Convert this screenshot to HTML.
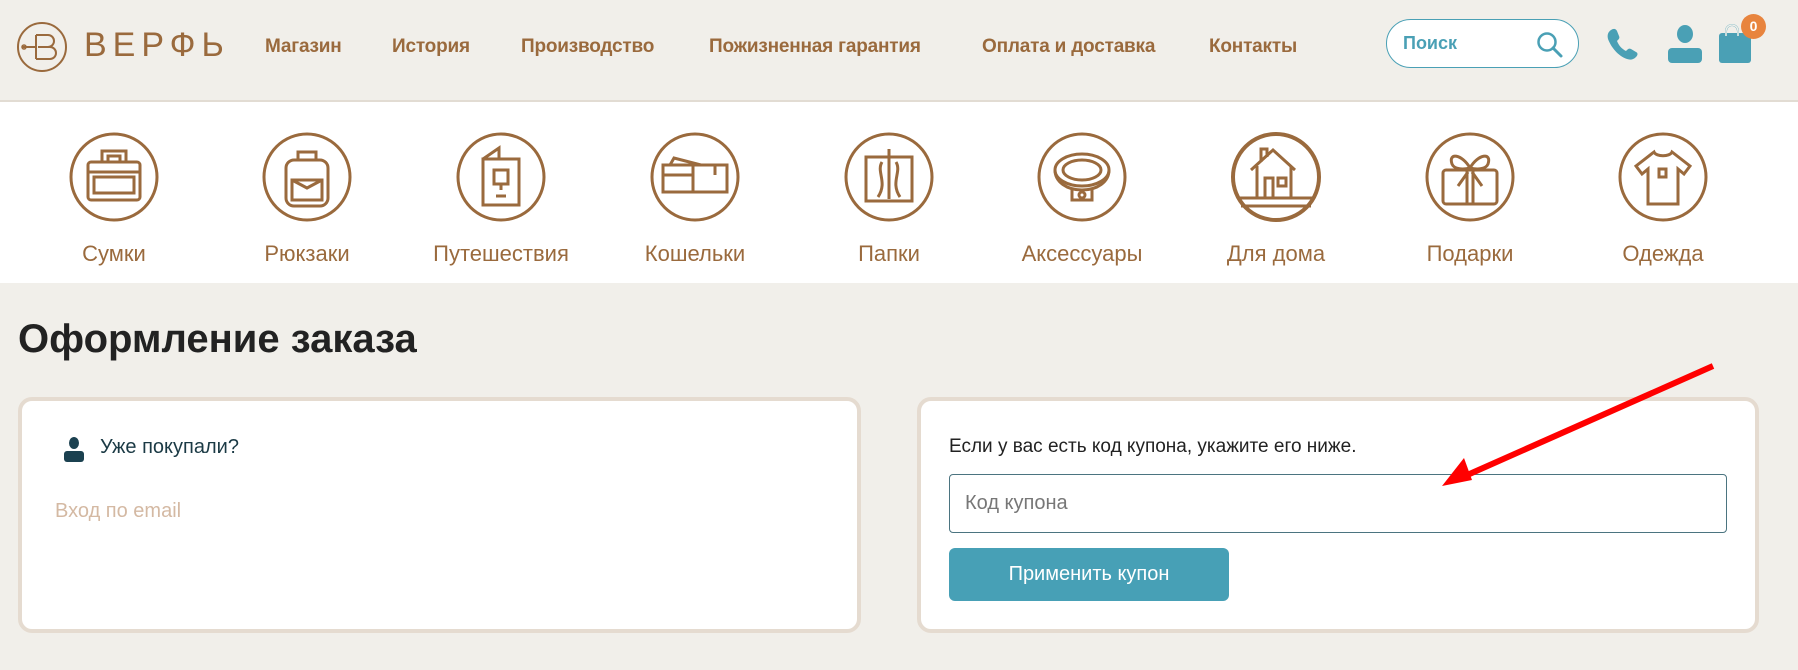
<!DOCTYPE html>
<html><head><meta charset="utf-8"><style>
*{margin:0;padding:0;box-sizing:border-box}
body{width:1798px;height:670px;background:#f1efea;font-family:"Liberation Sans","DejaVu Sans",sans-serif;position:relative;overflow:hidden}
.abs{position:absolute}
header{position:absolute;left:0;top:0;width:1798px;height:102px;border-bottom:2px solid #e2dcd3}
.nav{position:absolute;top:36px;font-size:19px;font-weight:bold;color:#9a6a3d;white-space:nowrap;letter-spacing:-0.2px}
.cats{position:absolute;left:0;top:102px;width:1798px;height:181px;background:#fff}
.cat{position:absolute;top:30px;width:190px;margin-left:-95px;text-align:center}
.cat svg{display:block;margin:0 auto}
.cat span{display:block;margin-top:19px;font-size:22px;color:#9a6a3d}
.box{position:absolute;top:397px;height:236px;background:#fff;border:4px solid #e5dbd0;border-radius:14px}
</style></head><body>
<header>
<svg class="abs" style="left:16px;top:21px" width="52" height="52" viewBox="0 0 52 52"><circle cx="26" cy="26" r="24" fill="none" stroke="#9a6a3d" stroke-width="2"/><path d="M20 14v24M20 14h12a6 6 0 0 1 0 12h-10M22 26h12a6 6 0 0 1 0 12H20M6 26h14" fill="none" stroke="#9a6a3d" stroke-width="2"/><circle cx="8" cy="26" r="2" fill="none" stroke="#9a6a3d" stroke-width="1.5"/></svg>
<div class="abs" style="left:84px;top:26px;font-size:34px;color:#9a6a3d;letter-spacing:6px;font-weight:300">ВЕРФЬ</div>
<div class="nav" style="left:265px">Магазин</div>
<div class="nav" style="left:392px">История</div>
<div class="nav" style="left:521px">Производство</div>
<div class="nav" style="left:709px">Пожизненная гарантия</div>
<div class="nav" style="left:982px">Оплата и доставка</div>
<div class="nav" style="left:1209px">Контакты</div>
<div class="abs" style="left:1386px;top:19px;width:193px;height:49px;border:1.5px solid #4aa0b5;border-radius:25px;background:#fff"><span class="abs" style="left:16px;top:13px;font-size:18px;font-weight:bold;color:#4aa0b5">Поиск</span>
<svg class="abs" style="left:148px;top:10px" width="30" height="30" viewBox="0 0 30 30"><circle cx="12" cy="12" r="8.5" fill="none" stroke="#4aa0b5" stroke-width="2.5"/><path d="M18 18l8 8" stroke="#4aa0b5" stroke-width="3" stroke-linecap="round"/></svg></div>
<svg class="abs" style="left:1605px;top:27px" width="38" height="36" viewBox="0 0 38 36"><path d="M6 3c3-2 5-1 6 1l2 5c1 2 0 3-2 5 2 5 5 8 9 10 2-2 3-3 5-2l5 3c2 1 2 3 0 5-3 3-6 3-9 2C13 29 6 20 3 12 2 8 3 5 6 3z" fill="#4aa0b5"/></svg>
<svg class="abs" style="left:1667px;top:24px" width="36" height="40" viewBox="0 0 36 40"><ellipse cx="18" cy="10" rx="8" ry="9" fill="#4aa0b5"/><rect x="1" y="24" width="34" height="15" rx="4" fill="#4aa0b5"/></svg>
<svg class="abs" style="left:1718px;top:22px" width="36" height="42" viewBox="0 0 36 42"><path d="M8 14V9a6 6 0 0 1 12 0v5" fill="none" stroke="#4aa0b5" stroke-width="2"/><rect x="1" y="11" width="32" height="30" rx="3" fill="#4aa0b5"/><path d="M8 14V9a6 6 0 0 1 12 0v5" fill="none" stroke="#f1efea" stroke-width="1.5"/></svg>
<div class="abs" style="left:1741px;top:14px;width:25px;height:25px;border-radius:50%;background:#e8843e;color:#fff;font-size:14px;font-weight:bold;text-align:center;line-height:25px">0</div>
</header>
<div class="cats">
<div class="cat" style="left:114px"><svg width="90" height="90" viewBox="0 0 90 90"><ellipse cx="45" cy="45" rx="43" ry="43" fill="none" stroke="#9a6a3d" stroke-width="3"/><g fill="none" stroke="#9a6a3d" stroke-width="3"><rect x="19" y="30" width="52" height="38" rx="3"/><rect x="25" y="45" width="40" height="16"/><path d="M33 30V19h24v11M39 30V24h12v6M19 40h52"/></g></svg><span>Сумки</span></div>
<div class="cat" style="left:307px"><svg width="90" height="90" viewBox="0 0 90 90"><ellipse cx="45" cy="45" rx="43" ry="43" fill="none" stroke="#9a6a3d" stroke-width="3"/><g fill="none" stroke="#9a6a3d" stroke-width="3"><rect x="24" y="28" width="42" height="46" rx="8"/><rect x="30" y="48" width="30" height="20"/><path d="M36 28v-8h18v8M30 48l15 8 15-8"/></g></svg><span>Рюкзаки</span></div>
<div class="cat" style="left:501px"><svg width="90" height="90" viewBox="0 0 90 90"><ellipse cx="45" cy="45" rx="43" ry="43" fill="none" stroke="#9a6a3d" stroke-width="3"/><g fill="none" stroke="#9a6a3d" stroke-width="3"><rect x="27" y="27" width="36" height="46"/><path d="M27 27l16-11v11M38 38h14v14H38zM45 52v6M40 64h10"/></g></svg><span>Путешествия</span></div>
<div class="cat" style="left:695px"><svg width="90" height="90" viewBox="0 0 90 90"><ellipse cx="45" cy="45" rx="43" ry="43" fill="none" stroke="#9a6a3d" stroke-width="3"/><g fill="none" stroke="#9a6a3d" stroke-width="3"><rect x="13" y="33" width="64" height="27"/><path d="M13 43h30v17M43 43V33M20 33l4-7 27 7M65 33v10"/></g></svg><span>Кошельки</span></div>
<div class="cat" style="left:889px"><svg width="90" height="90" viewBox="0 0 90 90"><ellipse cx="45" cy="45" rx="43" ry="43" fill="none" stroke="#9a6a3d" stroke-width="3"/><g fill="none" stroke="#9a6a3d" stroke-width="3"><rect x="22" y="25" width="46" height="44"/><path d="M45 17v50M38 30c-6 10 6 20-4 35M52 30c6 10-6 20 4 35"/></g></svg><span>Папки</span></div>
<div class="cat" style="left:1082px"><svg width="90" height="90" viewBox="0 0 90 90"><ellipse cx="45" cy="45" rx="43" ry="43" fill="none" stroke="#9a6a3d" stroke-width="3"/><g fill="none" stroke="#9a6a3d" stroke-width="3"><ellipse cx="45" cy="38" rx="27" ry="16"/><ellipse cx="45" cy="38" rx="19" ry="10"/><path d="M18 38c0 12 12 20 27 20s27-8 27-20M35 56v12h20V56"/><circle cx="45" cy="63" r="3"/></g></svg><span>Аксессуары</span></div>
<div class="cat" style="left:1276px"><svg width="90" height="90" viewBox="0 0 90 90"><ellipse cx="45" cy="45" rx="43" ry="43" fill="none" stroke="#9a6a3d" stroke-width="4"/><g fill="none" stroke="#9a6a3d" stroke-width="3"><path d="M20 38l22-20 22 20M26 34v32M60 34v32M30 30V17h6v8M34 66V46h8v20"/><rect x="47" y="46" width="8" height="8"/><path d="M6 66h78M10 74h70"/></g></svg><span>Для дома</span></div>
<div class="cat" style="left:1470px"><svg width="90" height="90" viewBox="0 0 90 90"><ellipse cx="45" cy="45" rx="43" ry="43" fill="none" stroke="#9a6a3d" stroke-width="3"/><g fill="none" stroke="#9a6a3d" stroke-width="3"><rect x="18" y="38" width="54" height="34" rx="3"/><path d="M42 38v34M48 38v34M45 36c-8-14-22-16-18-4 2 5 10 6 18 4zM45 36c8-14 22-16 18-4-2 5-10 6-18 4zM43 40l-10 14M47 40l10 14"/></g></svg><span>Подарки</span></div>
<div class="cat" style="left:1663px"><svg width="90" height="90" viewBox="0 0 90 90"><ellipse cx="45" cy="45" rx="43" ry="43" fill="none" stroke="#9a6a3d" stroke-width="3"/><g fill="none" stroke="#9a6a3d" stroke-width="3"><path d="M36 20l-18 14 6 8 6-5v35h30V37l6 5 6-8-18-14c-2 5-16 5-18 0z"/><rect x="41" y="37" width="7" height="8"/></g></svg><span>Одежда</span></div>
</div>
<div class="abs" style="left:18px;top:317px;font-size:40px;font-weight:bold;color:#222">Оформление заказа</div>
<div class="box" style="left:18px;width:843px">
<svg class="abs" style="left:40px;top:35px" width="24" height="26" viewBox="0 0 24 26"><ellipse cx="12" cy="7" rx="5" ry="6" fill="#1b4150"/><rect x="2" y="15" width="20" height="11" rx="3" fill="#1b4150"/></svg>
<div class="abs" style="left:78px;top:35px;font-size:20px;color:#1b3a45">Уже покупали?</div>
<div class="abs" style="left:33px;top:99px;font-size:20px;color:#d4b9a3">Вход по email</div>
</div>
<div class="box" style="left:917px;width:842px">
<div class="abs" style="left:28px;top:35px;font-size:19px;color:#222">Если у вас есть код купона, укажите его ниже.</div>
<div class="abs" style="left:28px;top:73px;width:778px;height:59px;border:1.5px solid #4b7480;border-radius:4px;background:#fff"><span class="abs" style="left:15px;top:17px;font-size:20px;color:#777">Код купона</span></div>
<div class="abs" style="left:28px;top:147px;width:280px;height:53px;background:#47a0b6;border-radius:6px;color:#fff;font-size:20px;text-align:center;line-height:53px">Применить купон</div>
</div>
<svg class="abs" style="left:0;top:0" width="1798" height="670"><path d="M1713 366L1465 476" stroke="#f00" stroke-width="6"/><path d="M1442 486l22-28 8 22z" fill="#f00"/></svg>
</body></html>
